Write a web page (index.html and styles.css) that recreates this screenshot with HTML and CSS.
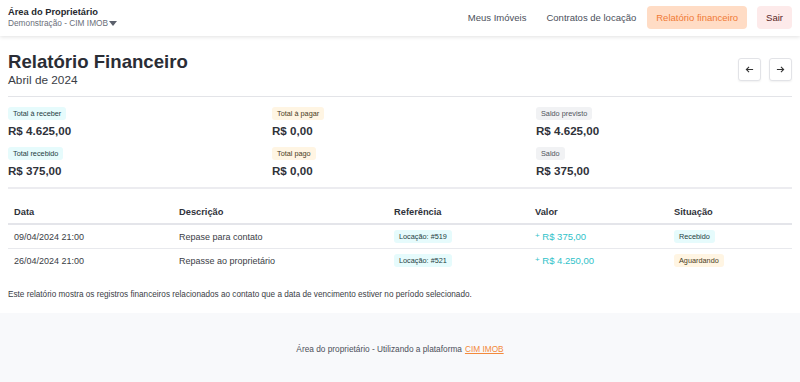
FILE: index.html
```html
<!doctype html>
<html lang="pt-BR">
<head>
    <meta charset="UTF-8">
    <meta name="viewport" content="width=device-width, initial-scale=1.0">
    <title>Relatório Financeiro</title>
    <link rel="stylesheet" href="styles.css">
</head>
<body>
    <header class="topbar">
        <div class="brand">
            <div class="brand_title">Área do Proprietário</div>
            <div class="brand_sub">Demonstração - CIM IMOB<span class="caret"></span></div>
        </div>
        <nav class="menu">
            <a class="menu_link">Meus Imóveis</a>
            <a class="menu_link">Contratos de locação</a>
            <a class="menu_link active">Relatório financeiro</a>
            <a class="menu_link logout">Sair</a>
        </nav>
    </header>

    <main class="content">
        <div class="page_head">
            <div>
                <h1 class="page_title">Relatório Financeiro</h1>
                <div class="page_sub">Abril de 2024</div>
            </div>
            <div class="pager">
                <button class="pager_btn" type="button">
                    <svg width="9" height="9" viewBox="0 0 10 10"><path d="M9 5H1.5M4.5 2L1.5 5l3 3" fill="none" stroke="#333" stroke-width="1.2"/></svg>
                </button>
                <button class="pager_btn" type="button">
                    <svg width="9" height="9" viewBox="0 0 10 10"><path d="M1 5h7.5M5.5 2l3 3-3 3" fill="none" stroke="#333" stroke-width="1.2"/></svg>
                </button>
            </div>
        </div>

        <div class="stats">
            <div class="stat">
                <span class="badge cyan">Total à receber</span>
                <div class="stat_value">R$ 4.625,00</div>
            </div>
            <div class="stat">
                <span class="badge amber">Total à pagar</span>
                <div class="stat_value">R$ 0,00</div>
            </div>
            <div class="stat">
                <span class="badge gray">Saldo previsto</span>
                <div class="stat_value">R$ 4.625,00</div>
            </div>
            <div class="stat">
                <span class="badge cyan">Total recebido</span>
                <div class="stat_value">R$ 375,00</div>
            </div>
            <div class="stat">
                <span class="badge amber">Total pago</span>
                <div class="stat_value">R$ 0,00</div>
            </div>
            <div class="stat">
                <span class="badge gray">Saldo</span>
                <div class="stat_value">R$ 375,00</div>
            </div>
        </div>

        <table class="records">
            <thead>
                <tr>
                    <th class="col_date">Data</th>
                    <th class="col_desc">Descrição</th>
                    <th class="col_ref">Referência</th>
                    <th class="col_val">Valor</th>
                    <th>Situação</th>
                </tr>
            </thead>
            <tbody>
                <tr>
                    <td>09/04/2024 21:00</td>
                    <td>Repase para contato</td>
                    <td><span class="badge cyan">Locação: #519</span></td>
                    <td class="amount"><span class="plus">+</span> R$ 375,00</td>
                    <td><span class="badge cyan">Recebido</span></td>
                </tr>
                <tr>
                    <td>26/04/2024 21:00</td>
                    <td>Repasse ao proprietário</td>
                    <td><span class="badge cyan">Locação: #521</span></td>
                    <td class="amount"><span class="plus">+</span> R$ 4.250,00</td>
                    <td><span class="badge amber">Aguardando</span></td>
                </tr>
            </tbody>
        </table>

        <p class="note">Este relatório mostra os registros financeiros relacionados ao contato que a data de vencimento estiver no período selecionado.</p>
    </main>

    <footer class="footer">
        Área do proprietário - Utilizando a plataforma <a class="footer_link">CIM IMOB</a>
    </footer>
</body>
</html>
```

FILE: styles.css
```css
* {
    box-sizing: border-box;
}

body {
    margin: 0;
    font-family: "Liberation Sans", Arial, sans-serif;
    color: #2f323a;
    background: #fff;
}

.topbar {
    height: 36px;
    display: flex;
    align-items: center;
    justify-content: space-between;
    padding: 0 8px;
    background: #fff;
    box-shadow: 0 1px 4px rgba(0, 0, 0, 0.12);
    position: relative;
}

.brand {
    margin-top: -1px;
}

.brand_title {
    font-size: 9.3px;
    line-height: 11px;
    font-weight: 700;
    color: #26282e;
}

.brand_sub {
    font-size: 8.3px;
    line-height: 10px;
    color: #6b6f7a;
}

.caret {
    display: inline-block;
    width: 0;
    height: 0;
    border-left: 4px solid transparent;
    border-right: 4px solid transparent;
    border-top: 5px solid #5b606c;
    margin-left: 1px;
    vertical-align: 0;
}

.menu {
    display: flex;
    align-items: center;
    gap: 2px;
    margin-top: -1px;
}

.menu_link {
    font-size: 9.5px;
    color: #4b4f5a;
    padding: 0 9px;
    height: 23px;
    line-height: 23px;
    border-radius: 4px;
}

.menu_link.active {
    background: #ffdcc5;
    color: #f07a35;
}

.menu_link.logout {
    background: #fdeaea;
    color: #5a1f1f;
    margin-left: 8px;
}

.content {
    padding: 15px 8px 13px;
}

.page_head {
    display: flex;
    justify-content: space-between;
    align-items: center;
    padding-bottom: 8px;
    border-bottom: 1px solid #e3e4e8;
}

.page_title {
    margin: 0;
    font-size: 18.6px;
    font-weight: 700;
    color: #2a2d35;
    line-height: 22px;
}

.page_sub {
    font-size: 11.8px;
    color: #3a3d45;
    line-height: 15px;
}

.pager {
    display: flex;
    gap: 8px;
}

.pager_btn {
    width: 23px;
    height: 23px;
    border: 1px solid #e2e3e7;
    background: #fff;
    border-radius: 3px;
    box-shadow: 0 1px 2px rgba(0, 0, 0, 0.06);
    display: flex;
    align-items: center;
    justify-content: center;
    padding: 0;
}

.stats {
    display: grid;
    grid-template-columns: 264px 264px 1fr;
    row-gap: 9px;
    padding: 10px 0 9px;
    border-bottom: 2px solid #ececf0;
}

.stat {
    display: flex;
    flex-direction: column;
    align-items: flex-start;
}

.badge {
    display: inline-block;
    font-size: 7.3px;
    line-height: 9px;
    padding: 2px 5px;
    border-radius: 3px;
}

.badge.cyan {
    background: #e6fbfc;
    color: #24403f;
}

.badge.amber {
    background: #fff5e3;
    color: #4a3c22;
}

.badge.gray {
    background: #f1f2f4;
    color: #50545c;
}

.stat_value {
    font-size: 11.6px;
    line-height: 14px;
    font-weight: 700;
    color: #2f323a;
    margin-top: 4px;
}

.records {
    width: 100%;
    border-collapse: collapse;
    margin-top: 12px;
    font-size: 9px;
}

.records th {
    text-align: left;
    font-weight: 700;
    font-size: 9.3px;
    line-height: 12px;
    color: #2f323a;
    padding: 5px 6px;
    border-bottom: 2px solid #e4e5ea;
}

.records td {
    padding: 5px 6px;
    line-height: 12px;
    color: #3a3d45;
    border-bottom: 1px solid #e8e9ed;
}

.records tbody tr:last-child td {
    border-bottom: none;
}

.col_date {
    width: 165px;
}

.col_desc {
    width: 215px;
}

.col_ref {
    width: 141px;
}

.col_val {
    width: 139px;
}

.records td.amount {
    color: #2fc2c9;
    font-size: 9.5px;
}

.plus {
    font-size: 8px;
    vertical-align: 2px;
}

.note {
    font-size: 8.2px;
    line-height: 10px;
    color: #3a3d45;
    margin: 18px 0 0;
}

.footer {
    background: #f8f9fb;
    height: 72px;
    display: flex;
    align-items: center;
    justify-content: center;
    font-size: 8.3px;
    color: #4b4f5a;
}

.footer_link {
    color: #f38a3c;
    text-decoration: underline;
    margin-left: 3px;
}
```
